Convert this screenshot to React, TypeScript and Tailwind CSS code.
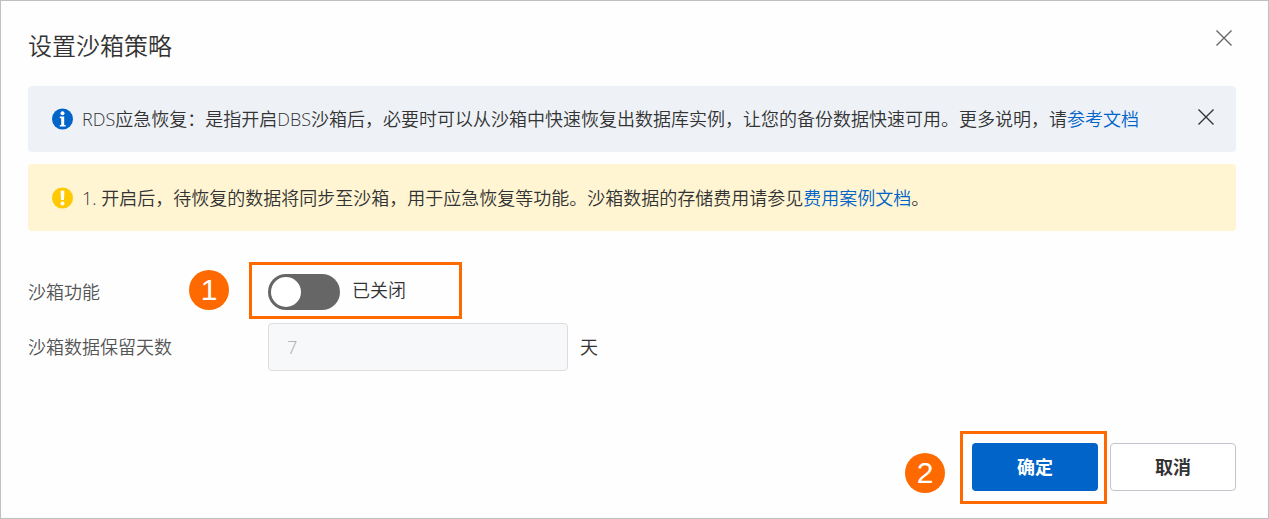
import React, { useState } from 'react';

interface MarkerProps {
  numero: number;
  className: string;
}

// Numbered step badge
const Marker: React.FC<MarkerProps> = ({ numero, className }) => (
  <span
    className={`absolute flex h-10 w-10 items-center justify-center rounded-full bg-[#ff6a00] font-['Liberation_Sans',sans-serif] text-3xl font-normal text-white ${className}`}
  >
    {numero}
  </span>
);

const CloseIcon: React.FC = () => (
  <svg className="h-4 w-4" viewBox="0 0 16 16" fill="none" stroke="currentColor" strokeWidth="1.4">
    <path d="M0.5 0.5L15.5 15.5M15.5 0.5L0.5 15.5" />
  </svg>
);

const InfoIcon: React.FC = () => (
  <svg className="h-[22px] w-[22px] shrink-0" viewBox="0 0 22 22">
    <circle cx="10.5" cy="11" r="10.5" fill="#0064c8" />
    <circle cx="10.5" cy="5.2" r="2" fill="#fff" />
    <path d="M7.8 8.6H12.2V17H13.6V18.6H7.8V17H9.2V10.2H7.8Z" fill="#fff" />
  </svg>
);

const WarningIcon: React.FC = () => (
  <svg className="h-[22px] w-[22px] shrink-0" viewBox="0 0 22 22">
    <circle cx="10.5" cy="11" r="10.5" fill="#ffc800" />
    <path d="M8.6 3.8H12.4L12 13H9Z" fill="#fff" />
    <circle cx="10.5" cy="16.6" r="2" fill="#fff" />
  </svg>
);

const App: React.FC = () => {
  const [ativo, setAtivo] = useState(false);
  const [dias, setDias] = useState('7');
  const [mostrarAviso, setMostrarAviso] = useState(true);

  return (
    <div
      role="dialog"
      aria-labelledby="titulo"
      className="min-h-screen border border-[#c0c0c0] bg-[#fefefe] pt-7 pr-8 pb-[27px] pl-[27px] font-['Open_Sans','Noto_Sans_CJK_SC',sans-serif] text-lg/6 font-[350] text-[#333]"
    >
      <header className="flex items-start justify-between pr-1">
        <h1 id="titulo" className="text-2xl/[34px] text-[#333]">设置沙箱策略</h1>
        <button type="button" aria-label="关闭" className="mt-px text-[#666]">
          <CloseIcon />
        </button>
      </header>

      <div className="mt-[23px] space-y-3">
        {mostrarAviso && (
          <div className="flex min-h-[66px] items-center gap-2 rounded-sm bg-[#eef2f7] pr-[22px] pl-6">
            <InfoIcon />
            <p className="flex-1">
              RDS应急恢复：是指开启DBS沙箱后，必要时可以从沙箱中快速恢复出数据库实例，让您的备份数据快速可用。更多说明，请
              <a href="#docs" className="text-[#0064c8]">参考文档</a>
            </p>
            <button type="button" aria-label="关闭提示" className="mb-1" onClick={() => setMostrarAviso(false)}>
              <CloseIcon />
            </button>
          </div>
        )}

        <div className="flex min-h-[67px] items-center gap-2 rounded-sm bg-[#fff5d2] px-6">
          <WarningIcon />
          <p>
            1. 开启后，待恢复的数据将同步至沙箱，用于应急恢复等功能。沙箱数据的存储费用请参见
            <a href="#custos" className="text-[#0064c8]">费用案例文档</a>。
          </p>
        </div>
      </div>

      <form onSubmit={e => e.preventDefault()}>
        <div className="mt-[43px] flex items-center">
          <label htmlFor="sandbox" className="w-60 text-[#555]">沙箱功能</label>
          <div className="relative flex items-center gap-3">
            <input
              id="sandbox"
              type="checkbox"
              role="switch"
              checked={ativo}
              onChange={e => setAtivo(e.target.checked)}
              className="h-9 w-[72px] appearance-none rounded-full bg-[#666] p-[3px] before:block before:h-[30px] before:w-[30px] before:rounded-full before:bg-white checked:bg-[#0064c8] checked:before:ml-9"
            />
            <span className="pb-1">{ativo ? '已开启' : '已关闭'}</span>
            {/* Step 1 */}
            <span className="pointer-events-none absolute -top-3 -left-[19px] h-[57px] w-[213px] border-3 border-[#ff6a00]" />
            <Marker numero={1} className="-top-1 -left-[79px]" />
          </div>
        </div>

        <div className="mt-[13px] flex items-center">
          <label htmlFor="dias" className="w-60 text-[#555]">沙箱数据保留天数</label>
          <input
            id="dias"
            type="text"
            value={dias}
            disabled={!ativo}
            onChange={e => setDias(e.target.value)}
            className="mr-3 h-12 w-[300px] rounded-sm border border-[#ddd] bg-[#f7f8fa] px-[18px] disabled:text-[#aaa]"
          />
          <span>天</span>
        </div>

        <div className="mt-[72px] flex justify-end gap-3 font-bold">
          <div className="relative">
            <button type="submit" className="h-12 w-[126px] rounded-sm bg-[#0064c8] text-white">
              确定
            </button>
            {/* Step 2 */}
            <span className="pointer-events-none absolute -top-3 -left-3 h-[73px] w-[147px] border-3 border-[#ff6a00]" />
            <Marker numero={2} className="top-2.5 -left-[67px]" />
          </div>
          <button type="button" className="h-12 w-[126px] rounded-sm border border-[#c0c6cc] bg-white">
            取消
          </button>
        </div>
      </form>
    </div>
  );
};

export default App;
